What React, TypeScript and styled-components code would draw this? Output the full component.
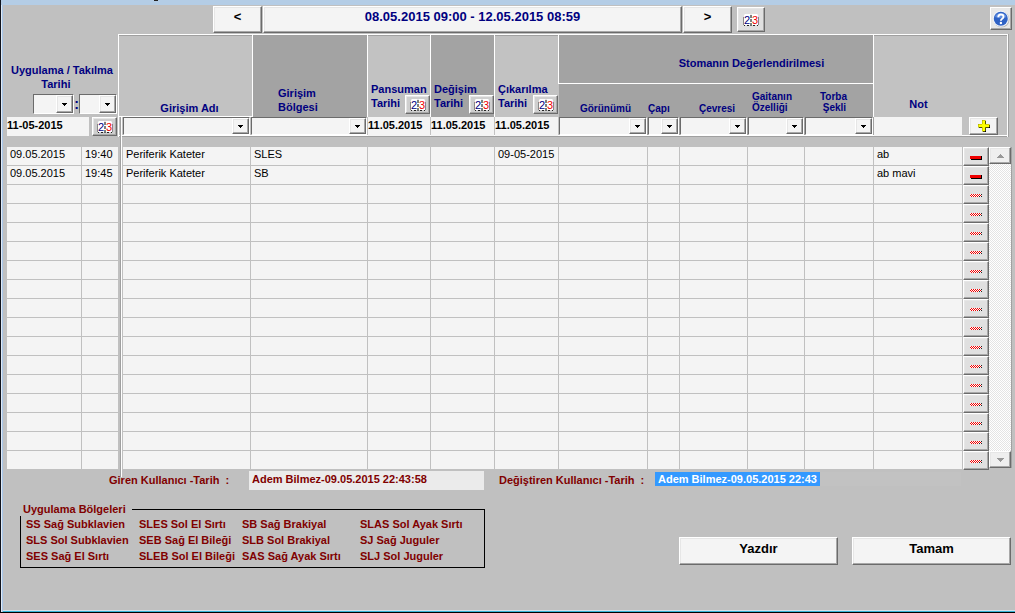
import React from 'react';
import styled, { createGlobalStyle, css } from 'styled-components';

const face = '#c0c0c0';
const paper = '#f4f4f4';
const navy = '#000080';
const maroon = '#800000';
const shade = '#6b6b6b';
const columns =
  '75px 37px 4px minmax(0, 1fr) 117px 63px 64px 64px 89px 32px 68px 57px 69px 89px 26px 23px';

const GlobalStyle = createGlobalStyle`
  *, *::before, *::after { box-sizing: border-box; }
  body {
    margin: 0;
    background: ${face};
    font-family: "Liberation Sans", Arial, sans-serif;
    font-size: 11px;
    color: #000;
  }
  button, input, select { font: inherit; color: inherit; margin: 0; padding: 0; border-radius: 0; }
`;

const raised = css`
  border: 1px solid;
  border-color: #fff ${shade} ${shade} #fff;
  box-shadow: inset -1px -1px 0 #a8a8a8, inset 1px 1px 0 #e6e6e6;
`;

const Window = styled.div`
  min-height: 100vh;
  display: flex;
  flex-direction: column;
  background: ${face};
  border-left: 1px solid #10131c;
  border-bottom: 1px solid #000;
  box-shadow: inset 1px 0 0 #dfe9f5, inset 2px 0 0 #a9c6e8, inset 0 -1px 0 #35b4d6, inset 0 -2px 0 #d5dfe8;
`;

const TitleStrip = styled.div`
  height: 5px;
  background: #b4cde6;
  padding-left: 153px;

  &::before {
    content: '';
    display: block;
    width: 4px;
    height: 1px;
    background: #222;
  }
`;

const Toolbar = styled.header`
  display: flex;
  align-items: flex-start;
  gap: 1px;
  padding: 1px 3px 0 212px;
  height: 29px;
`;

const PushButton = styled.button<{ $w?: number; $size?: number }>`
  ${raised}
  width: ${(p) => (p.$w ? `${p.$w}px` : 'auto')};
  ${(p) => !p.$w && 'flex: 1;'}
  height: 27px;
  padding-bottom: 5px;
  background: ${paper};
  font-weight: bold;
  font-size: ${(p) => p.$size ?? 13}px;
  line-height: 16px;
`;

const RangeButton = styled(PushButton)`
  color: ${navy};
`;

const IconButton = styled.button<{ $w: number; $h: number; $bg?: string }>`
  ${raised}
  flex: none;
  display: flex;
  align-items: center;
  justify-content: center;
  width: ${(p) => p.$w}px;
  height: ${(p) => p.$h}px;
  background: ${(p) => p.$bg ?? '#cfcfcf'};
  font-weight: normal;
`;

const ToolbarIcons = styled.div`
  display: flex;
  justify-content: space-between;
  width: 279px;
  padding: 1px 0 0 4px;
`;

const Sheet = styled.main`
  position: relative;
  margin-left: 6px;

  &::after {
    content: '';
    position: absolute;
    left: 113px;
    top: 83px;
    bottom: -7px;
    width: 2px;
    background: linear-gradient(to right, #a0a0a0 50%, #fff 50%);
  }
`;

const Head = styled.div`
  display: grid;
  grid-template-columns: ${columns};
  grid-template-rows: 50px 33px 20px;
  margin: 0 3px 10px 0;
  color: ${navy};
  font-weight: bold;
  line-height: 14px;
`;

const HeadFrame = styled.div`
  grid-area: 1 / 3 / 4 / -1;
  margin: 0 4px 0 -1px;
  background: #c2c2c2;
  border: 1px solid #fff;
  border-bottom-width: 0;
  box-shadow: inset 0 -1px 0 #a0a0a0, inset 0 -2px 0 #fff, inset 0 1px 0 #a0a0a0, 1px 0 0 #a0a0a0;
`;

const HeadCell = styled.div<{
  $col: string;
  $row?: string;
  $dark?: boolean;
  $align?: string;
  $pad?: string;
  $small?: boolean;
}>`
  grid-column: ${(p) => p.$col};
  grid-row: ${(p) => p.$row ?? '1 / 3'};
  display: flex;
  align-items: flex-end;
  justify-content: ${(p) => p.$align ?? 'center'};
  padding: ${(p) => p.$pad ?? '0'};
  margin-top: ${(p) => (p.$row ? 0 : 1)}px;
  margin-left: -1px;
  border-left: 1px solid ${(p) => (p.$small ? 'transparent' : '#fff')};
  background: ${(p) => (p.$small ? 'transparent' : p.$dark ? '#a3a3a3' : '#c2c2c2')};
  box-shadow: ${(p) => (p.$small ? 'none' : 'inset 0 1px 0 #a0a0a0')};
  font-size: ${(p) => (p.$small ? 10 : 11)}px;
  line-height: ${(p) => (p.$small ? 11 : 14)}px;
  white-space: nowrap;
`;

const NameHead = styled(HeadCell)`
  margin-left: 0;
  margin-right: -1px;
  border-left: 0;
  border-bottom: 1px solid #fff;
`;

const SiteHead = styled(HeadCell)`
  margin-left: 1px;
`;

const StomaHead = styled(HeadCell)`
  margin-top: 1px;
  border-bottom: 1px solid #fff;
`;

const StomaBand = styled.div`
  grid-area: 2 / 9 / 4 / 14;
  background: #a3a3a3;
  margin-bottom: 2px;
`;

const DateLabel = styled.span`
  flex: 1;
  min-width: 0;
  padding-bottom: 4px;
`;

const AppliedHead = styled.div`
  grid-area: 1 / 1 / 3 / 3;
  display: flex;
  flex-direction: column;
  justify-content: flex-end;
  text-align: center;
  padding: 0 2px 3px 0;
`;

const TimePickers = styled.div`
  display: flex;
  justify-content: flex-end;
  align-items: center;
  padding-top: 3px;
  font-size: 14px;
`;

const EntryCell = styled.div<{ $col: string }>`
  grid-column: ${(p) => p.$col};
  grid-row: 3;
  display: flex;
  align-items: flex-start;
  padding-right: 1px;
`;

const AppliedEntry = styled(EntryCell)`
  justify-content: space-between;
  padding-right: 2px;
`;

const AddCell = styled(EntryCell)`
  padding-left: 6px;
`;

const TextBox = styled.input`
  width: 100%;
  min-width: 0;
  height: 19px;
  padding-bottom: 4px;
  border: 0;
  background: ${paper};
  color: #000;
  font-weight: bold;
`;

const AppliedDate = styled(TextBox)`
  width: 82px;
`;

const ComboFrame = styled.span<{ $w?: number; $h?: number }>`
  position: relative;
  display: block;
  width: ${(p) => (p.$w ? `${p.$w}px` : '100%')};
  height: ${(p) => p.$h ?? 18}px;
  border: 1px solid;
  border-color: ${shade} #fff #fff ${shade};
  background: ${paper};
`;

const Select = styled.select`
  appearance: none;
  display: block;
  width: 100%;
  height: 100%;
  border: 0;
  background: transparent;
  font-size: 11px;
`;

const ComboArrow = styled.span`
  ${raised}
  position: absolute;
  top: 0;
  right: 0;
  bottom: 0;
  width: 17px;
  display: flex;
  align-items: center;
  justify-content: center;
  background: ${paper};
  pointer-events: none;
`;

const Body = styled.div`
  display: flex;
  padding-right: 3px;
`;

const Grid = styled.table`
  flex: 1;
  min-width: 0;
  table-layout: fixed;
  border-collapse: separate;
  border-spacing: 0;
`;

const Cell = styled.td`
  height: 19px;
  padding: 0 0 3px 3px;
  border-right: 1px solid ${face};
  border-bottom: 1px solid ${face};
  background: ${paper};
  line-height: 15px;
  white-space: nowrap;
`;

const BareCell = styled.td`
  height: 19px;
  padding: 0;
`;

const RowButton = styled.button`
  ${raised}
  display: flex;
  align-items: center;
  justify-content: center;
  width: 26px;
  height: 19px;
  padding-top: 2px;
  background: #e0e0e0;
`;

const ScrollBar = styled.div`
  display: flex;
  flex-direction: column;
  justify-content: space-between;
  width: 23px;
  margin-bottom: 2px;
  border-right: 1px solid #a0a0a0;
  background: repeating-conic-gradient(#fff 0 25%, #e4e4e4 0 50%) 0 0 / 2px 2px;
`;

const Users = styled.div`
  display: flex;
  height: 19px;
  margin: 1px 54px 0 108px;
  color: ${maroon};
  font-weight: bold;
`;

const UserLabel = styled.label<{ $w: number }>`
  flex: none;
  width: ${(p) => p.$w}px;
  line-height: 19px;
  white-space: pre;
`;

const UserField = styled.input`
  width: 235px;
  height: 19px;
  margin-right: 15px;
  padding: 0 0 4px 3px;
  border: 0;
  background: #ebebeb;
  font-weight: bold;
`;

const ChangedBy = styled.output`
  flex: 1;
  height: 14px;
  margin-top: 1px;
  background: #c2c2c2;
  white-space: nowrap;
`;

const Highlight = styled.mark`
  display: inline-block;
  height: 14px;
  padding: 0 3px;
  background: #3399ff;
  color: #fff;
  line-height: 14px;
`;

const Footer = styled.footer`
  display: flex;
  align-items: flex-start;
  gap: 14px;
  padding: 12px 4px 0 19px;
`;

const Regions = styled.fieldset`
  width: 465px;
  margin: 0 auto 0 0;
  padding: 0 0 3px 5px;
  border: 1px solid #000;
  color: ${maroon};
  font-weight: bold;
`;

const RegionsTitle = styled.legend`
  margin-left: -6px;
  padding: 0 6px 0 3px;
  background: ${face};
  line-height: 14px;
`;

const RegionList = styled.ul`
  display: grid;
  grid-template-columns: 113px 103px 118px 1fr;
  grid-template-rows: repeat(3, 16px);
  grid-auto-flow: column;
  margin: 0;
  padding: 0;
  list-style: none;
  line-height: 16px;
  white-space: nowrap;
`;

const FooterButton = styled(PushButton)`
  height: 28px;
  margin-top: 35px;
`;

const digitFont = 'Liberation Sans, Arial, sans-serif';

const CalendarIcon = () => (
  <svg width="16" height="14" viewBox="0 0 16 14" aria-hidden="true">
    <path d="M1 2L2 1H7L8 2L9 1H14L15 2V12H1Z" fill="#fff" />
    <path d="M0.5 4V12M15.500 4V12" fill="none" stroke="#888" />
    <path d="M1 12.500H2M4 12.500H6M10 12.500H12M14 12.500H15" fill="none" stroke="#222" />
    <path d="M8 2V5M8 6V9M8 10V13" stroke="#000" />
    <text x="1" y="11" fontSize="11" fontFamily={digitFont} fill="#000080">2</text>
    <text x="9" y="11" fontSize="11" fontFamily={digitFont} fill="#f00000">3</text>
  </svg>
);

const HelpIcon = () => (
  <svg width="18" height="18" viewBox="0 0 18 18" aria-hidden="true">
    <circle cx="9.500" cy="9.500" r="8" fill="#b8b8b8" />
    <circle cx="8.800" cy="8.800" r="8" fill="#f0f4fb" />
    <circle cx="8.800" cy="8.800" r="7" fill="#2f62c4" />
    <path d="M3 7a6 5.500 0 0 1 11.500 0q-5 2.500-11.500 0" fill="#5d8be0" />
    <path d="M6.300 7.200q0-2.700 2.600-2.700t2.600 2.200q0 1.200-1.300 2t-1.300 2" fill="none" stroke="#fff" strokeWidth="1.900" />
    <circle cx="8.900" cy="13" r="1.200" fill="#fff" />
  </svg>
);

const PlusIcon = () => (
  <svg width="12" height="12" viewBox="0 0 12 12" shapeRendering="crispEdges" aria-hidden="true">
    <path d="M5 1H8V5H12V8H8V12H5V8H1V5H5Z" fill="#000" />
    <path d="M4 0H7V4H11V7H7V11H4V7H0V4H4Z" fill="#ff0" stroke="#a0a000" strokeWidth="0.500" />
  </svg>
);

const ditherDots = [1, 2, 3].flatMap((y) =>
  Array.from({ length: 6 }, (_, i) => ({ x: i * 2 + (y % 2), y })),
);

const MinusIcon = ({ off }: { off?: boolean }) => (
  <svg width="12" height="5" viewBox="0 0 12 5" shapeRendering="crispEdges" aria-hidden="true">
    {off ? (
      <>
        <rect y="1" width="11" height="3" fill="#fff" />
        {ditherDots.map((d) => (
          <rect
            key={`${d.x}-${d.y}`}
            x={d.x}
            y={d.y}
            width="1"
            height="1"
            fill={d.x > 10 || (d.y === 3 && d.x > 8) ? '#222' : '#f00000'}
          />
        ))}
      </>
    ) : (
      <>
        <rect x="1" y="1" width="11" height="4" fill="#000" />
        <rect y="1" width="11" height="3" fill="#f00000" />
      </>
    )}
  </svg>
);

const Triangle = ({ up, muted }: { up?: boolean; muted?: boolean }) => (
  <svg width="7" height="4" viewBox="0 0 7 4" shapeRendering="crispEdges" aria-hidden="true">
    {muted ? (
      <path d={up ? 'M0 4V3H1V2H2V1H3V0H4V1H5V2H6V3H7V4Z' : 'M0 0V1H1V2H2V3H3V4H4V3H5V2H6V1H7V0Z'} fill="#999" />
    ) : (
      <path d="M1 1V2H2V3H3V4H4V3H5V2H6V1Z" fill="#000" />
    )}
  </svg>
);

const Combo = ({ label, w, h }: { label: string; w?: number; h?: number }) => (
  <ComboFrame $w={w} $h={h}>
    <Select aria-label={label} defaultValue="">
      <option value="" />
    </Select>
    <ComboArrow>
      <Triangle />
    </ComboArrow>
  </ComboFrame>
);

const CalendarButton = ({ label }: { label: string }) => (
  <IconButton $w={25} $h={19} aria-label={label}>
    <CalendarIcon />
  </IconButton>
);

const colWidths = [75, 37, 4, 0, 117, 63, 64, 64, 89, 32, 68, 57, 69, 89, 26];

const records = [
  ['09.05.2015', '19:40', 'Periferik Kateter', 'SLES', '', '', '09-05-2015', '', '', '', '', '', 'ab'],
  ['09.05.2015', '19:45', 'Periferik Kateter', 'SB', '', '', '', '', '', '', '', '', 'ab mavi'],
];
const rows = Array.from({ length: 17 }, (_, i) => records[i] ?? Array(13).fill(''));

const regions = [
  'SS Sağ Subklavien',
  'SLS Sol Subklavien',
  'SES Sağ El Sırtı',
  'SLES Sol El Sırtı',
  'SEB Sağ El Bileği',
  'SLEB Sol El Bileği',
  'SB Sağ Brakiyal',
  'SLB Sol Brakiyal',
  'SAS Sağ Ayak Sırtı',
  'SLAS Sol Ayak Sırtı',
  'SJ Sağ Juguler',
  'SLJ Sol Juguler',
];

const dateHeads = [
  { title: 'Pansuman', col: 6, dark: false },
  { title: 'Değişim', col: 7, dark: true },
  { title: 'Çıkarılma', col: 8, dark: false },
];

const combos = [
  { label: 'Girişim Adı', col: 4 },
  { label: 'Girişim Bölgesi', col: 5 },
  { label: 'Görünümü', col: 9 },
  { label: 'Çapı', col: 10 },
  { label: 'Çevresi', col: 11 },
  { label: 'Gaitanın Özelliği', col: 12 },
  { label: 'Torba Şekli', col: 13 },
];

export default function App() {
  return (
    <>
      <GlobalStyle />
      <Window>
        <TitleStrip />
        <Toolbar>
          <PushButton $w={49}>&lt;</PushButton>
          <RangeButton>08.05.2015 09:00 - 12.05.2015 08:59</RangeButton>
          <PushButton $w={49}>&gt;</PushButton>
          <ToolbarIcons>
            <IconButton $w={28} $h={25} $bg="#e0e0e0" aria-label="Takvim">
              <CalendarIcon />
            </IconButton>
            <IconButton $w={22} $h={23} $bg="#e8e8e8" aria-label="Yardım">
              <HelpIcon />
            </IconButton>
          </ToolbarIcons>
        </Toolbar>

        <Sheet>
          <Head>
            <HeadFrame />
            <AppliedHead>
              <span>Uygulama / Takılma</span>
              <span>Tarihi&nbsp;&nbsp;&nbsp;&nbsp;</span>
              <TimePickers>
                <Combo label="Saat" w={41} h={20} />
                :
                <Combo label="Dakika" w={38} h={20} />
              </TimePickers>
            </AppliedHead>
            <NameHead $col="3 / 5" $pad="0 0 1px 8px">Girişim Adı</NameHead>
            <SiteHead $col="5" $dark $align="flex-start" $pad="0 0 3px 25px">
              <span>
                Girişim
                <br />
                Bölgesi
              </span>
            </SiteHead>
            {dateHeads.map((h) => (
              <HeadCell key={h.title} $col={`${h.col}`} $dark={h.dark} $pad="0 1px 3px 3px">
                <DateLabel>
                  {h.title}
                  <br />
                  Tarihi
                </DateLabel>
                <CalendarButton label={`${h.title} Tarihi`} />
              </HeadCell>
            ))}
            <StomaBand />
            <StomaHead $col="9 / 14" $row="1" $dark $pad="0 0 13px 70px">
              Stomanın Değerlendirilmesi
            </StomaHead>
            <HeadCell $col="9" $row="2" $small $pad="0 0 3px 4px">Görünümü</HeadCell>
            <HeadCell $col="10" $row="2" $small $align="flex-start" $pad="0 0 3px">Çapı</HeadCell>
            <HeadCell $col="11" $row="2" $small $pad="0 0 3px 6px">Çevresi</HeadCell>
            <HeadCell $col="12" $row="2" $small $align="flex-start" $pad="0 0 4px 4px">
              <span>
                Gaitanın
                <br />
                Özelliği
              </span>
            </HeadCell>
            <HeadCell $col="13" $row="2" $small $pad="0 12px 4px 0">
              <span>
                Torba
                <br />
                &nbsp;Şekli
              </span>
            </HeadCell>
            <HeadCell $col="14" $pad="0 0 6px">Not</HeadCell>

            <AppliedEntry $col="1 / 3">
              <AppliedDate aria-label="Uygulama tarihi" defaultValue="11-05-2015" />
              <CalendarButton label="Uygulama tarihi seç" />
            </AppliedEntry>
            {combos.map((c) => (
              <EntryCell key={c.label} $col={`${c.col}`}>
                <Combo label={c.label} />
              </EntryCell>
            ))}
            {dateHeads.map((h) => (
              <EntryCell key={h.title} $col={`${h.col}`}>
                <TextBox aria-label={`${h.title} Tarihi`} defaultValue="11.05.2015" />
              </EntryCell>
            ))}
            <EntryCell $col="14">
              <TextBox aria-label="Not" />
            </EntryCell>
            <AddCell $col="15 / 17">
              <IconButton $w={29} $h={18} $bg={paper} aria-label="Ekle">
                <PlusIcon />
              </IconButton>
            </AddCell>
          </Head>

          <Body>
            <Grid>
              <colgroup>
                {colWidths.map((w, i) => (
                  <col key={i} style={w ? { width: w } : undefined} />
                ))}
              </colgroup>
              <tbody>
                {rows.map((row, r) => (
                  <tr key={r}>
                    {row.slice(0, 2).map((text: string, c: number) => (
                      <Cell key={c}>{text}</Cell>
                    ))}
                    <BareCell />
                    {row.slice(2).map((text: string, c: number) => (
                      <Cell key={c}>{text}</Cell>
                    ))}
                    <BareCell>
                      <RowButton disabled={!row[0]} aria-label="Sil">
                        <MinusIcon off={!row[0]} />
                      </RowButton>
                    </BareCell>
                  </tr>
                ))}
              </tbody>
            </Grid>
            <ScrollBar>
              <IconButton $w={22} $h={17} $bg="#efefef" aria-label="Yukarı">
                <Triangle up muted />
              </IconButton>
              <IconButton $w={22} $h={17} $bg="#efefef" aria-label="Aşağı">
                <Triangle muted />
              </IconButton>
            </ScrollBar>
          </Body>
        </Sheet>

        <Users>
          <UserLabel $w={140} htmlFor="created">Giren Kullanıcı -Tarih  :</UserLabel>
          <UserField id="created" readOnly value="Adem Bilmez-09.05.2015 22:43:58" />
          <UserLabel $w={156} htmlFor="changed">Değiştiren Kullanıcı -Tarih  :</UserLabel>
          <ChangedBy id="changed">
            <Highlight>Adem Bilmez-09.05.2015 22:43</Highlight>
          </ChangedBy>
        </Users>

        <Footer>
          <Regions>
            <RegionsTitle>Uygulama Bölgeleri</RegionsTitle>
            <RegionList>
              {regions.map((name) => (
                <li key={name}>{name}</li>
              ))}
            </RegionList>
          </Regions>
          <FooterButton $w={159} $size={13}>Yazdır</FooterButton>
          <FooterButton $w={159} $size={13}>Tamam</FooterButton>
        </Footer>
      </Window>
    </>
  );
}
